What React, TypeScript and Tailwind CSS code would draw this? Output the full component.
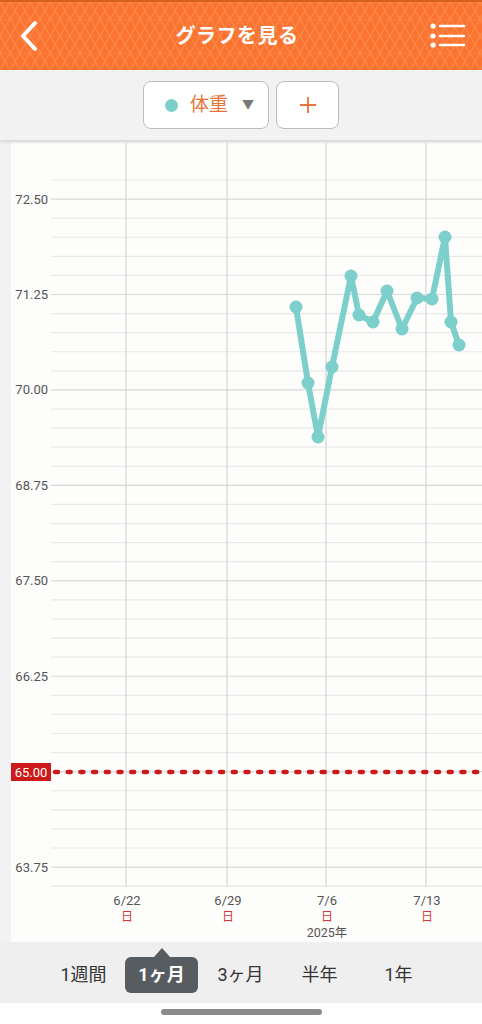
import React from "react";

const FONT = { fontFamily: 'Roboto, "Noto Sans CJK JP", "Noto Sans", sans-serif' };

// chart coordinates (page minus 11,143)
const points: [number, number][] = [
  [285, 164], [297, 240], [307, 294], [321, 224], [340, 133], [348, 172], [362, 179],
  [376, 148], [391, 186], [406, 155], [421, 156], [434, 94], [440, 179], [448, 202],
];

const yOf = (v: number) => 56 + ((72.5 - v) / 0.25) * 19.086;

const Header = () => (
  <div className="relative h-[70px] bg-[#fa7330] border-t-2 border-[#d8601f] flex items-center justify-between px-4 overflow-hidden">
    <svg className="absolute inset-0" width="482" height="70">
      <defs>
        <pattern id="tri" width="20" height="17" patternUnits="userSpaceOnUse">
          <path
            d="M0 17 L10 0 M10 17 L20 0 M0 0 L10 17 M10 0 L20 17 M0 0 H20"
            stroke="#ff9457"
            strokeWidth="1.2"
            fill="none"
            opacity="0.6"
          />
        </pattern>
      </defs>
      <rect width="482" height="70" fill="url(#tri)" />
    </svg>
    <svg className="relative" width="28" height="34" viewBox="0 0 28 34">
      <path d="M19 4 L7 17 L19 30" stroke="white" strokeWidth="4" fill="none" strokeLinecap="round" strokeLinejoin="round" />
    </svg>
    <div className="relative text-white text-[20px] font-semibold tracking-wide">グラフを見る</div>
    <svg className="relative" width="36" height="30" viewBox="0 0 36 30">
      <circle cx="3" cy="5" r="2.6" fill="white" />
      <circle cx="3" cy="15" r="2.6" fill="white" />
      <circle cx="3" cy="24" r="2.6" fill="white" />
      <path d="M10 5 H34 M10 15 H34 M10 24 H34" stroke="white" strokeWidth="2.6" strokeLinecap="round" />
    </svg>
  </div>
);

const Toolbar = () => (
  <div className="relative z-10 h-[70px] bg-[#f2f2f2] flex items-center justify-center gap-[7px] shadow-[0_2px_3px_rgba(0,0,0,0.12)]">
    <button className="w-[126px] h-[48px] bg-white border border-[#bdbdbd] rounded-[8px] flex items-center pl-[21px]">
      <span className="w-[13px] h-[13px] rounded-full bg-[#7ccfca]" />
      <span className="ml-[12px] text-[19px] text-[#e8743a]">体重</span>
      <span className="ml-[14px] text-[12px] text-[#777]">▼</span>
    </button>
    <button className="w-[63px] h-[48px] bg-white border border-[#bdbdbd] rounded-[8px] flex items-center justify-center">
      <svg width="20" height="20" viewBox="0 0 20 20">
        <path d="M10 2 V18 M2 10 H18" stroke="#e8743a" strokeWidth="1.8" />
      </svg>
    </button>
  </div>
);

const Chart = () => {
  const lines = [];
  for (let i = 0; i <= 37; i++) {
    const y = 37 + i * 19.086;
    const major = (i - 1) % 5 === 0;
    lines.push(
      <line key={i} x1="40" x2="471" y1={y} y2={y} stroke={major ? "#d9d9d9" : "#e9e9e9"} strokeWidth="1.2" />
    );
  }
  const labels = ["72.50", "71.25", "70.00", "68.75", "67.50", "66.25"];
  const vx = [115, 216, 315, 415];
  const dates = ["6/22", "6/29", "7/6", "7/13"];
  const pts = points.map(([x, y]) => `${x},${y}`).join(" ");
  return (
    <svg width="471" height="799" viewBox="0 0 471 799" className="block">
      {lines}
      {vx.map((x) => (
        <line key={x} x1={x} x2={x} y1="0" y2="744" stroke="#d6d6d6" strokeWidth="1.2" />
      ))}
      {labels.map((l, i) => (
        <text key={l} x="37" y={yOf(72.5 - i * 1.25) + 4.5} textAnchor="end" fontSize="13" fill="#555" style={FONT}>
          {l}
        </text>
      ))}
      <text x="37" y={yOf(63.75) + 4.5} textAnchor="end" fontSize="13" fill="#555" style={FONT}>63.75</text>
      <line x1="44" x2="471" y1="629" y2="629" stroke="#cc1a1a" strokeWidth="4.5" strokeDasharray="3 9.7" strokeLinecap="round" />
      <rect x="0" y="620" width="40" height="18" fill="#cc1a1a" />
      <text x="20" y="633.5" textAnchor="middle" fontSize="13" fill="white" style={FONT}>65.00</text>
      {vx.map((x, i) => (
        <g key={dates[i]} style={FONT}>
          <text x={x + 1} y="762" textAnchor="middle" fontSize="13" fill="#555">{dates[i]}</text>
          <text x={x + 1} y="778" textAnchor="middle" fontSize="12" fill="#d8343a">日</text>
        </g>
      ))}
      <text x="316" y="794" textAnchor="middle" fontSize="12.5" fill="#555" style={FONT}>2025年</text>
      <polyline points={pts} fill="none" stroke="#7ccfca" strokeWidth="6" strokeLinejoin="round" strokeLinecap="round" />
      {points.map(([x, y], i) => (
        <circle key={i} cx={x} cy={y} r="6.5" fill="#7ccfca" />
      ))}
    </svg>
  );
};

const Tabs = () => {
  const tabs = ["1週間", "1ヶ月", "3ヶ月", "半年", "1年"];
  return (
    <div className="h-[61px] bg-[#efefef] flex items-center pl-[44px]">
      {tabs.map((t, i) =>
        i === 1 ? (
          <div key={t} className="relative ml-[2px] mr-[3px] w-[73px] h-[36px] mt-[4px] rounded-[6px] bg-[#575c60] flex items-center justify-center text-white text-[18px] font-bold">
            <span className="absolute -top-[9px] left-[29px] w-0 h-0 border-x-[8px] border-x-transparent border-b-[9px] border-b-[#575c60]" />
            {t}
          </div>
        ) : (
          <div key={t} className="w-[79px] text-center text-[18px] text-[#333] mt-[4px]">
            {t}
          </div>
        )
      )}
    </div>
  );
};

export default function App() {
  return (
    <div className="w-[482px] h-[1024px] bg-white overflow-hidden flex flex-col" style={FONT}>
      <Header />
      <Toolbar />
      <div className="bg-[#f2f2f2] pl-[11px] pt-[3px]">
        <div className="bg-[#fdfdfb]">
          <Chart />
        </div>
      </div>
      <Tabs />
      <div className="flex-1 bg-white flex justify-center pt-[6px]">
        <div className="w-[161px] h-[6px] rounded-full bg-[#8a8a8a]" />
      </div>
    </div>
  );
}
